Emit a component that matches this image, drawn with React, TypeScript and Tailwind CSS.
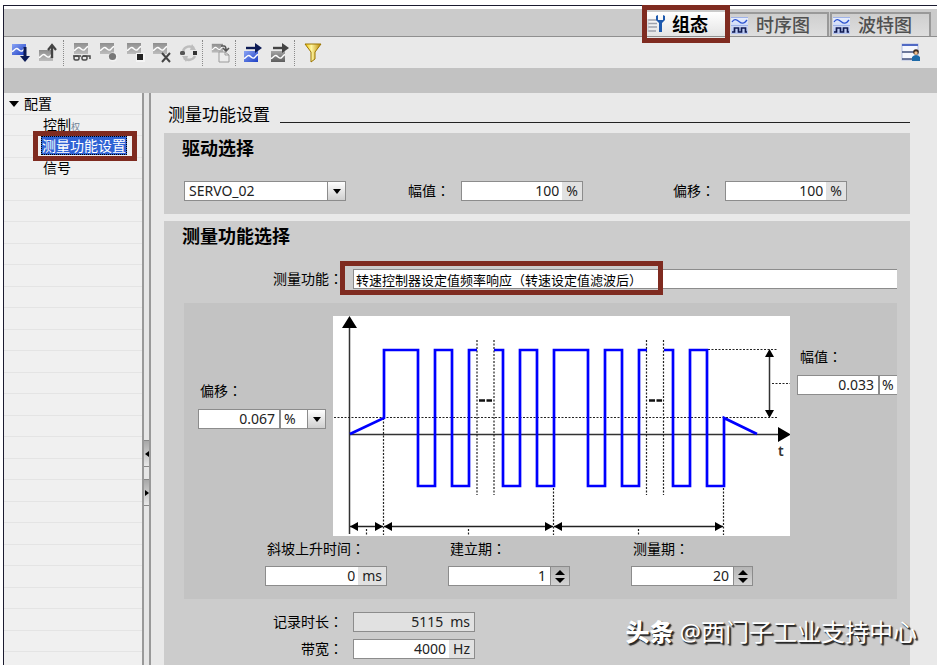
import React, { useState } from "react";
import type { ReactNode } from "react";

const cjk = "font-['Noto_Sans','Noto_Sans_CJK_SC',sans-serif]";
const annotation = "pointer-events-none absolute border-[5px] border-[#7f2b20]";

function Label({ htmlFor, children, className = "" }: { htmlFor: string; children: ReactNode; className?: string }) {
  return (
    <label htmlFor={htmlFor} className={`block h-5 whitespace-nowrap text-sm leading-5 text-black ${className}`}>
      {children}
      <span className="font-['Noto_Sans_CJK_TC',sans-serif] leading-none">：</span>
    </label>
  );
}

/* ---------- Toolbar icons ---------- */

function Tile({ x, y, tone }: { x: number; y: number; tone: "blue" | "light" | "dark" }) {
  const fill = tone === "blue" ? "url(#tileBlue)" : tone === "dark" ? "url(#tileDark)" : "url(#tileLight)";
  return (
    <g transform={`translate(${x} ${y})`}>
      <rect width="14" height="11" fill={fill} />
      <path d="M0 7.5C2 7 3 4 5 4.5S8 8 10 7s2-3 4-3.5" fill="none" stroke="#fff" strokeWidth="1.4" />
    </g>
  );
}

function IconDefs() {
  return (
    <svg className="absolute size-0" aria-hidden="true">
      <defs>
        <linearGradient id="tileBlue" x1="0" y1="0" x2="1" y2="1">
          <stop offset="0" stopColor="#8aa4f5" />
          <stop offset="1" stopColor="#1d3fc4" />
        </linearGradient>
        <linearGradient id="tileLight" x1="0" y1="0" x2="0" y2="1">
          <stop offset="0" stopColor="#8e8e8e" />
          <stop offset="1" stopColor="#bdbdbd" />
        </linearGradient>
        <linearGradient id="tileDark" x1="0" y1="0" x2="0" y2="1">
          <stop offset="0" stopColor="#a5a5a5" />
          <stop offset="1" stopColor="#5e5e5e" />
        </linearGradient>
        <linearGradient id="tilePale" x1="0" y1="0" x2="0" y2="1">
          <stop offset="0" stopColor="#e9effd" />
          <stop offset="1" stopColor="#b4c4f0" />
        </linearGradient>
        <linearGradient id="gold" x1="0" y1="0" x2="1" y2="0">
          <stop offset="0" stopColor="#f4c400" />
          <stop offset="0.4" stopColor="#fff6a0" />
          <stop offset="1" stopColor="#b98600" />
        </linearGradient>
      </defs>
    </svg>
  );
}

function ToolButton({ label, children }: { label: string; children: ReactNode }) {
  return (
    <button type="button" aria-label={label} className="flex h-[30px] w-[27px] shrink-0 items-center justify-center">
      <svg width="20" height="20" viewBox="0 0 20 20" aria-hidden="true">
        {children}
      </svg>
    </button>
  );
}

function Separator() {
  return <span className="h-[26px] w-px shrink-0 border-l border-dotted border-[#8a8a8a]" />;
}

function Toolbar() {
  return (
    <div className="flex h-[31px] items-center bg-[#e9e9e9] pl-[3px] pr-[13px] pt-px">
      <ToolButton label="下载">
        <Tile x={1} y={1} tone="blue" />
        <path d="M14 4v11" stroke="#0c1b55" strokeWidth="3" />
        <path d="M9 13h10l-5 6z" fill="#0c1b55" />
      </ToolButton>
      <ToolButton label="上传">
        <Tile x={1} y={7} tone="light" />
        <path d="M14 15V4" stroke="#444" strokeWidth="2.4" />
        <path d="M10 7l4-5 4 5" fill="none" stroke="#444" strokeWidth="2.2" />
      </ToolButton>
      <span className="w-[2px]" />
      <Separator />
      <span className="w-[3px]" />
      <ToolButton label="监视">
        <Tile x={3} y={0} tone="light" />
        <g fill="none" stroke="#4a4a4a" strokeWidth="1.5">
          <path d="M2 13h8M12 13h7v3" />
          <rect x="3" y="13" width="5" height="4" rx="1.5" />
          <rect x="11" y="13" width="5" height="4" rx="1.5" />
        </g>
      </ToolButton>
      <ToolButton label="记录">
        <Tile x={2} y={0} tone="light" />
        <circle cx="15" cy="14" r="4.6" fill="#f3f3f3" />
        <circle cx="14.5" cy="13.500" r="3.6" fill="#777" />
      </ToolButton>
      <ToolButton label="停止">
        <Tile x={2} y={0} tone="light" />
        <rect x="11" y="10" width="9" height="9" fill="#f4f4f4" />
        <rect x="12" y="11" width="6" height="6" fill="#222" />
      </ToolButton>
      <ToolButton label="删除">
        <Tile x={1} y={0} tone="light" />
        <path d="M10 10l8 9m0-9l-8 9" stroke="#444" strokeWidth="2" />
      </ToolButton>
      <ToolButton label="循环">
        <path d="M4 8a7 7 0 0 1 11-3M16 13a7 7 0 0 1-11 2" fill="none" stroke="#bdbdbd" strokeWidth="2.5" />
        <path d="M13 1l4 6h-6zM7 19l-4-6h6z" fill="#bdbdbd" />
        <rect x="1" y="8" width="5" height="4" rx="1.5" fill="#555" />
        <rect x="14" y="8" width="4" height="4" fill="#333" />
      </ToolButton>
      <Separator />
      <span className="w-[4px]" />
      <ToolButton label="复制">
        <g transform="scale(.8)">
          <Tile x={1} y={1} tone="light" />
        </g>
        <path d="M10 3h3q2 0 2 4m-3-2l3 3 3-3" fill="none" stroke="#555" strokeWidth="1.600" />
        <path d="M8 9h6l4 3v7H8z" fill="#ededed" stroke="#9b9b9b" />
        <path d="M14 9v3h4" fill="none" stroke="#9b9b9b" />
      </ToolButton>
      <span className="w-px" />
      <Separator />
      <span className="w-[3px]" />
      <ToolButton label="导入">
        <Tile x={1} y={8} tone="blue" />
        <path d="M3 5h11" stroke="#0c1b55" strokeWidth="2.4" />
        <path d="M12 0l7 5-7 5z" fill="#0c1b55" />
      </ToolButton>
      <ToolButton label="导出">
        <Tile x={1} y={8} tone="dark" />
        <path d="M3 5h11" stroke="#444" strokeWidth="2.4" />
        <path d="M12 0l7 5-7 5z" fill="#444" />
      </ToolButton>
      <span className="w-px" />
      <Separator />
      <span className="w-1" />
      <ToolButton label="过滤">
        <path d="M2 1h16l-6 8v7l-4 3V9z" fill="url(#gold)" stroke="#9a7400" />
      </ToolButton>
      <span className="flex-1" />
      <ToolButton label="用户视图">
        <rect x="1" y="1" width="16" height="16" fill="#f5f7fd" stroke="#b4bfe4" />
        <rect x="1" y="1" width="16" height="2" fill="#5069c4" />
        <path d="M1 9h14M1 16h13" stroke="#41527c" strokeWidth="1.4" />
        <circle cx="15" cy="9" r="2.8" fill="#3a2a20" />
        <circle cx="15" cy="10" r="1.7" fill="#f0bd8c" />
        <path d="M11 18v-4q4-4 8 0v4z" fill="#1d6aa8" />
      </ToolButton>
    </div>
  );
}

/* ---------- Tabs ---------- */

function WaveIcon() {
  return (
    <svg width="17" height="17" viewBox="0 0 17 17" className="shrink-0" aria-hidden="true">
      <rect width="17" height="17" fill="url(#tilePale)" />
      <path d="M0 .5h17M0 8.500h17" stroke="#9fb3ea" />
      <path d="M1 5C3 2 5 2 8 4.500S13 7 16 3" fill="none" stroke="#2a51cf" strokeWidth="1.300" />
      <path d="M1 15h2.500v-4h4v4h3v-4h4v4H16" fill="none" stroke="#101a52" strokeWidth="1.700" />
    </svg>
  );
}

function ConfigIcon() {
  return (
    <svg width="18" height="18" viewBox="0 0 18 18" className="shrink-0" aria-hidden="true">
      <path d="M1 5h9M1 8.500h9M1 12h9M1 16h8" stroke="#9ea2ad" strokeWidth="1.500" />
      <path d="M1 4v13" stroke="#c6c9d2" />
      <path d="M9 1v4l3 3v9h3V8l3-3V1l-2-1v5h-5V0z" fill="#1c58ad" />
    </svg>
  );
}

function TabBar() {
  return (
    <div role="tablist" className="flex h-7 items-end justify-end border-b border-[#8f8f8f] bg-[#cbcbcb] pr-[5px]">
      <div className="relative">
        <button
          role="tab"
          aria-selected="true"
          className="flex h-6 w-[84px] items-center gap-[7px] bg-gradient-to-b from-white to-[#e4e4e4] pl-[3px] text-lg leading-6 font-bold"
        >
          <ConfigIcon />
          组态
        </button>
        <div className={`${annotation} -left-[2px] -top-[7px] h-[38px] w-[88px]`} />
      </div>
      {["时序图", "波特图"].map((name) => (
        <button
          key={name}
          role="tab"
          aria-selected="false"
          className="mr-px flex h-6 w-[101px] items-center gap-2 border-2 border-b-0 border-[#999] bg-gradient-to-b from-[#cfcfcf] to-[#dedede] pl-px text-lg leading-6 font-medium text-[#505050]"
        >
          <WaveIcon />
          {name}
        </button>
      ))}
    </div>
  );
}

/* ---------- Sidebar ---------- */

function Sidebar() {
  return (
    <nav
      aria-label="配置"
      className="w-[138px] shrink-0 bg-[#f0f0f0] bg-[linear-gradient(transparent_21px,#e4e4e4_21px,#e4e4e4_22px,transparent_22px,transparent_42px,#e4e4e4_42px)] bg-[length:100%_43px] text-sm leading-[21px]"
    >
      <button type="button" className="flex h-[21px] items-center gap-[5px] pl-[5px]">
        <svg width="10" height="6" viewBox="0 0 10 6" aria-hidden="true">
          <path d="M0 0h10L5 6z" />
        </svg>
        配置
      </button>
      <ul className="pl-[37px]">
        <li className="h-[22px] pl-[2px]">
          <a href="#control">
            控制<span className="text-[9px] text-[#6f7f95]">权</span>
          </a>
        </li>
        <li className="relative h-[21px]">
          <a
            href="#settings"
            className="block h-[19px] w-[86px] whitespace-nowrap border border-dotted border-black bg-[#2f62d4] leading-[17px] text-white"
          >
            测量功能设置
          </a>
          <div className={`${annotation} -left-2 -top-[5px] h-[30px] w-[104px]`} />
        </li>
        <li className="h-[22px] pl-[2px]">
          <a href="#signal">信号</a>
        </li>
      </ul>
    </nav>
  );
}

function Splitter() {
  const handle =
    "flex h-[27px] w-full items-center justify-center border-y border-[#888] bg-gradient-to-b from-[#a8a8a8] to-[#e8e8e8]";
  return (
    <div className="flex w-[9px] shrink-0 flex-col gap-3 border-x-2 border-[#999] bg-[#e6e6e6] pt-[347px]">
      <button type="button" aria-label="折叠" className={handle}>
        <svg width="4" height="6" viewBox="0 0 4 6">
          <path d="M4 0v6L0 3z" />
        </svg>
      </button>
      <button type="button" aria-label="展开" className={handle}>
        <svg width="4" height="6" viewBox="0 0 4 6">
          <path d="M0 0v6l4-3z" />
        </svg>
      </button>
    </div>
  );
}

/* ---------- Fields ---------- */

const box = "flex h-5 border border-[#8c8c8c] text-sm leading-[18px] text-[#222]";
const numeric = "w-0 min-w-0 flex-1 bg-transparent text-right outline-none";

function UnitField({ id, value, unit, readOnly = false }: { id: string; value: string; unit: string; readOnly?: boolean }) {
  return (
    <div className={`${box} w-[122px] ${readOnly ? "bg-[#e1e1e1]" : "bg-white"}`}>
      <input id={id} defaultValue={value} readOnly={readOnly} className={`${numeric} pr-[3px]`} />
      <span className="bg-[#e1e1e1] pl-1 pr-1">{unit}</span>
    </div>
  );
}

function DropArrow() {
  return (
    <span className="pointer-events-none absolute inset-y-0 right-0 flex w-[18px] items-center justify-center border-l border-[#8c8c8c] bg-gradient-to-b from-white to-[#cfcfcf]">
      <svg width="8" height="5" viewBox="0 0 8 5">
        <path d="M0 0h8L4 5z" />
      </svg>
    </span>
  );
}

function SpinField({ id, initial }: { id: string; initial: number }) {
  const [value, setValue] = useState(initial);
  return (
    <div className={`${box} w-[122px] bg-white`}>
      <input
        id={id}
        inputMode="numeric"
        value={value}
        onChange={(e) => setValue(Number(e.target.value) || 0)}
        className={`${numeric} pr-1`}
      />
      <div className="flex w-[19px] flex-col items-center justify-center gap-[3px] border-l border-[#8c8c8c] bg-gradient-to-b from-[#b5b5b5] to-[#d4d4d4]">
        <button type="button" aria-label="增加" onClick={() => setValue(value + 1)}>
          <svg className="block" width="10" height="5" viewBox="0 0 10 5">
            <path d="M0 5h10L5 0z" />
          </svg>
        </button>
        <button type="button" aria-label="减少" onClick={() => setValue(value - 1)}>
          <svg className="block" width="10" height="5" viewBox="0 0 10 5">
            <path d="M0 0h10L5 5z" />
          </svg>
        </button>
      </div>
    </div>
  );
}

/* ---------- Signal diagram ---------- */

function Diagram() {
  const spans = [
    [350, 383],
    [384, 553],
    [554, 723],
  ];
  return (
    <svg className="block h-[220px] w-[457px] shrink-0 bg-white" viewBox="333 316 457 220" role="img" aria-label="测量信号">
      <g stroke="#333" strokeWidth="1.500">
        <path d="M349.500 322v212M349 434.500h432" />
        <path d="M769.500 354v60" />
      </g>
      <path d="M349.500 316l7.500 12h-15zM778 427l13 7.500-13 7.500z" />
      <path d="M769.500 349l4.500 8h-9zM769.500 418l4.500-8h-9z" />
      <g stroke="#222" strokeWidth="1.200" strokeDasharray="2 1.500">
        <path d="M334 417.500h444M708 349.500h70M772 383.500h18" />
        <path d="M477 340v155M494 340v155M646.500 340v155M663.500 340v155" />
        <path d="M383.500 418v117M553.500 488v47M723.500 488v47M366.500 529v7M468.500 529v7M638.500 529v7" />
      </g>
      {spans.map(([a, b]) => (
        <g key={a}>
          <path d={`M${a} 526.500H${b}`} stroke="#222" strokeWidth="1.300" />
          <path d={`M${a} 526.500l8-4.500v9zM${b} 526.500l-8-4.500v9z`} />
        </g>
      ))}
      <g fill="none" stroke="#0000ff" strokeWidth="2.700">
        <path d="M350 434L384 418V350H418V486H435V350H452V486H469V350H477" />
        <path d="M494 350H503V486H520V350H537V486H554V350H588V486H605V350H622V486H639V350H647" />
        <path d="M664 350H673V486H690V350H707V486H724V418L757 434" />
      </g>
      <path d="M479 400.500h6m1.500 0h5.500M649 400.500h6m1.500 0h5.500" stroke="#111" strokeWidth="2.500" />
      <text x="778" y="456" fontSize="14" fontWeight="600" fill="#333" fontFamily="Noto Sans, sans-serif">
        t
      </text>
    </svg>
  );
}

function Heading({ children }: { children: ReactNode }) {
  return <h2 className="pl-[18px] text-lg leading-[30px] font-bold">{children}</h2>;
}

function MeasurementPanel() {
  return (
    <div className="ml-5 mr-[13px] mt-[14px] bg-[#c3c3c3] pb-[13px] pt-[13px]">
      <div className="flex">
        <div className="w-[149px] shrink-0 pl-[14px] pt-[65px]">
          <Label htmlFor="offset2" className="pl-[2px]">
            偏移
          </Label>
          <div className={`${box} relative mt-2 w-32 bg-white`}>
            <input id="offset2" defaultValue="0.067" className="w-[80px] bg-transparent pr-1 text-right outline-none" />
            <select
              aria-label="偏移单位"
              className="flex-1 appearance-none border-l-2 border-[#8c8c8c] bg-transparent pl-[3px] leading-[18px] outline-none"
            >
              <option>%</option>
            </select>
            <DropArrow />
          </div>
        </div>
        <Diagram />
        <div className="min-w-0 flex-1 pl-[7px] pt-[31px]">
          <Label htmlFor="amp2" className="pl-[3px]">
            幅值
          </Label>
          <div className={`${box} mt-2 border-r-0 bg-white`}>
            <input id="amp2" defaultValue="0.033" className={`${numeric} pr-1`} />
            <span className="w-[19px] border-l-2 border-[#8c8c8c] pl-[2px]">%</span>
          </div>
        </div>
      </div>
      <div className="flex gap-[61px] pl-[81px] pt-[3px]">
        <div>
          <Label htmlFor="ramp" className="mb-[7px] pl-[2px]">
            斜坡上升时间
          </Label>
          <UnitField id="ramp" value="0" unit="ms" />
        </div>
        <div>
          <Label htmlFor="settle" className="mb-[7px] pl-[2px]">
            建立期
          </Label>
          <SpinField id="settle" initial={1} />
        </div>
        <div>
          <Label htmlFor="measure" className="mb-[7px] pl-[2px]">
            测量期
          </Label>
          <SpinField id="measure" initial={20} />
        </div>
      </div>
    </div>
  );
}

function Main() {
  return (
    <main className="flex min-w-0 flex-1 flex-col bg-[#e9e9e9] pl-[13px] pr-[27px]">
      <div className="flex h-10 items-center gap-[10px] pl-1 pt-1">
        <h1 className="whitespace-nowrap text-[17px] leading-6">测量功能设置</h1>
        <div className="mt-[14px] h-px flex-1 bg-[#222]" />
      </div>

      <section className="bg-[#ccc] pb-[13px]">
        <Heading>驱动选择</Heading>
        <div className="mt-[18px] flex items-center pl-5">
          <div className={`${box} relative w-[162px] bg-white`}>
            <select aria-label="驱动" className="w-full appearance-none bg-transparent pl-1 leading-[18px] outline-none">
              <option>SERVO_02</option>
            </select>
            <DropArrow />
          </div>
          <Label htmlFor="amp1" className="ml-[62px] w-[53px]">
            幅值
          </Label>
          <UnitField id="amp1" value="100" unit="%" />
          <Label htmlFor="offset1" className="ml-[90px] w-[52px]">
            偏移
          </Label>
          <UnitField id="offset1" value="100" unit="%" />
        </div>
      </section>

      <section className="mt-[7px] flex-1 bg-[#ccc]">
        <Heading>测量功能选择</Heading>
        <div className="mt-[18px] flex items-center pr-[13px]">
          <Label htmlFor="func" className="mr-[10px] w-[179px] text-right">
            测量功能
          </Label>
          <div className="relative flex-1">
            <input
              id="func"
              defaultValue="转速控制器设定值频率响应（转速设定值滤波后）"
              className="block h-5 w-full border border-r-0 border-[#8c8c8c] bg-white pl-[2px] text-[13px] leading-[18px] text-black outline-none"
            />
            <div className={`${annotation} -left-[13px] -top-2 h-[34px] w-[323px]`} />
          </div>
        </div>
        <MeasurementPanel />
        <div className="mt-[13px] flex flex-col gap-[7px] pb-1">
          <div className="flex items-center">
            <Label htmlFor="duration" className="mr-[10px] w-[179px] text-right">
              记录时长
            </Label>
            <UnitField id="duration" value="5115" unit="ms" readOnly />
          </div>
          <div className="flex items-center">
            <Label htmlFor="bandwidth" className="mr-[10px] w-[179px] text-right">
              带宽
            </Label>
            <UnitField id="bandwidth" value="4000" unit="Hz" />
          </div>
        </div>
      </section>
    </main>
  );
}

export default function App() {
  return (
    <div className={`relative flex min-h-screen flex-col bg-white pl-[3px] pt-[5px] text-black ${cjk}`}>
      <IconDefs />
      <div className="flex flex-1 flex-col border-l border-t border-[#1c1c30] pt-[3px]">
        <TabBar />
        <Toolbar />
        <div className="h-[25px] bg-[#c2c2c2]" />
        <div className="flex flex-1">
          <Sidebar />
          <Splitter />
          <Main />
        </div>
      </div>
      <p className="pointer-events-none absolute bottom-[15px] right-5 flex items-center gap-[6px] whitespace-nowrap text-2xl leading-9 text-white [text-shadow:1px_1px_1px_#222,2px_2px_1px_#333]">
        <span className="font-black">头条</span>
        <span>@西门子工业支持中心</span>
      </p>
    </div>
  );
}
